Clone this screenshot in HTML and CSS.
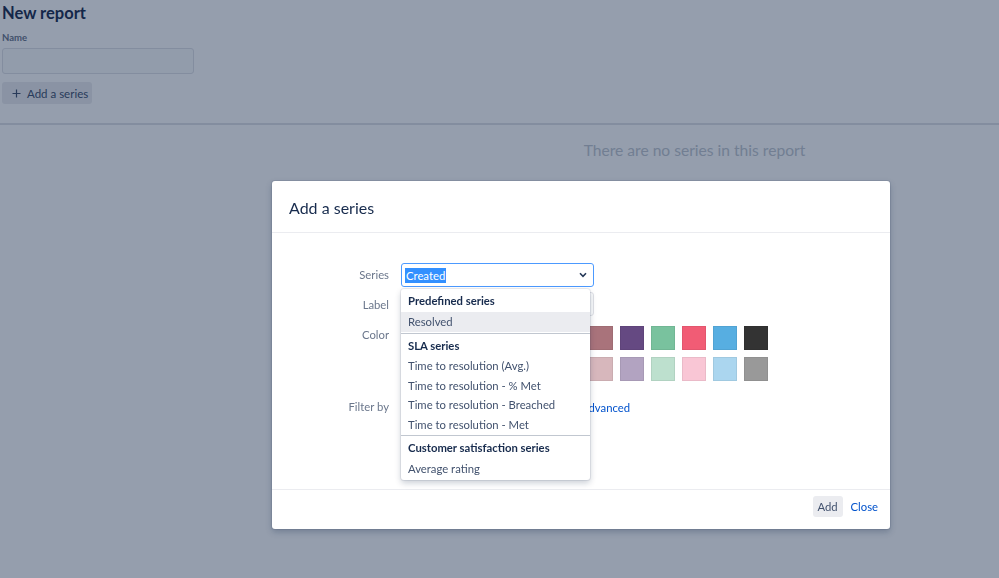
FILE: index.html
```html
<!DOCTYPE html>
<html lang="en">
<head>
<meta charset="utf-8">
<title>New report</title>
<link rel="stylesheet" href="styles.css">
</head>
<body>
<main class="page">
  <h1 class="title">New report</h1>
  <div class="field">
    <label class="field-label">Name</label>
    <div class="text-input"></div>
  </div>
  <button class="btn-add" type="button">
    <svg class="plus" width="9" height="9" viewBox="0 0 9 9"><path d="M4.5 0.5v8M0.5 4.5h8" stroke="currentColor" stroke-width="1.2" fill="none"/></svg>
    <span>Add a series</span>
  </button>
  <div class="divider"></div>
  <div class="empty">There are no series in this report</div>
</main>

<div class="blanket"></div>

<section class="modal">
  <header class="modal-header">
    <h2 class="modal-title">Add a series</h2>
  </header>
  <div class="modal-body">
    <div class="row row-series">
      <div class="form-label">Series</div>
      <div class="control">
        <div class="select">
          <span class="selected">Created</span>
          <svg class="chev" width="8" height="6" viewBox="0 0 8 6"><path d="M1 1.3l3 3 3-3" stroke="#253858" stroke-width="1.6" fill="none"/></svg>
        </div>
        <div class="dropdown">
          <div class="dd-group">Predefined series</div>
          <div class="dd-item active">Resolved</div>
          <div class="dd-sep"></div>
          <div class="dd-group">SLA series</div>
          <div class="dd-item">Time to resolution (Avg.)</div>
          <div class="dd-item">Time to resolution - % Met</div>
          <div class="dd-item">Time to resolution - Breached</div>
          <div class="dd-item">Time to resolution - Met</div>
          <div class="dd-sep"></div>
          <div class="dd-group">Customer satisfaction series</div>
          <div class="dd-item">Average rating</div>
        </div>
      </div>
    </div>
    <div class="row row-label">
      <div class="form-label">Label</div>
      <div class="control"><div class="text-field"></div></div>
    </div>
    <div class="row row-color">
      <div class="form-label label-color">Color</div>
      <div class="swatches">
        <span class="sw c1"></span><span class="sw c2"></span><span class="sw c3"></span><span class="sw c4"></span><span class="sw c5"></span><span class="sw c6"></span>
        <span class="sw c7"></span><span class="sw c8"></span><span class="sw c9"></span><span class="sw c10"></span><span class="sw c11"></span><span class="sw c12"></span>
        <span class="sw c13"></span><span class="sw c14"></span><span class="sw c15"></span><span class="sw c16"></span><span class="sw c17"></span><span class="sw c18"></span>
        <span class="sw c19"></span><span class="sw c20"></span><span class="sw c21"></span><span class="sw c22"></span><span class="sw c23"></span><span class="sw c24"></span>
      </div>
    </div>
    <div class="row row-filter">
      <div class="form-label">Filter by</div>
      <div class="control filter">
        <div class="filter-field"></div>
        <a class="link" href="#">Advanced</a>
      </div>
    </div>
  </div>
  <footer class="modal-footer">
    <button class="btn" type="button">Add</button>
    <a class="link close" href="#">Close</a>
  </footer>
</section>
</body>
</html>
```
FILE: styles.css
```css
* { box-sizing: border-box; }

html, body {
  margin: 0;
  height: 100%;
}

body {
  font-family: "Lato", "Liberation Sans", sans-serif;
  color: #172b4d;
  background: #ffffff;
  overflow: hidden;
}

.page {
  padding: 2px 0 0 2px;
}

.title {
  margin: 0;
  font-size: 16.5px;
  font-weight: 700;
  line-height: 22px;
  color: #1d2e50;
}

.field {
  margin-top: 8px;
  display: flex;
  flex-direction: column;
}

.field-label {
  font-size: 9.5px;
  font-weight: 700;
  line-height: 12px;
  color: #6b778c;
}

.text-input {
  margin-top: 4px;
  width: 192px;
  height: 26px;
  border: 1px solid #dfe1e6;
  border-radius: 3px;
  background: #fafbfc;
}

.btn-add {
  margin-top: 8px;
  display: flex;
  align-items: center;
  gap: 6px;
  width: 90px;
  height: 22px;
  padding: 0 0 0 10px;
  border: none;
  border-radius: 3px;
  background: #ebecf0;
  color: #42526e;
  font-family: inherit;
  font-size: 11.5px;
}

.plus { color: #42526e; }

.divider {
  margin-top: 19px;
  margin-left: -2px;
  height: 2px;
  background: #dfe1e6;
}

.empty {
  margin-top: 14px;
  margin-left: 388px;
  text-align: center;
  font-size: 15.6px;
  line-height: 22px;
  color: #c1c7d0;
}

.blanket {
  position: fixed;
  inset: 0;
  background: rgba(9, 30, 66, 0.43);
}

.modal {
  position: fixed;
  left: 272px;
  top: 181px;
  width: 618px;
  height: 348px;
  background: #ffffff;
  border-radius: 3px;
  box-shadow: 0 0 0 1px rgba(9, 30, 66, 0.08), 0 3px 6px rgba(9, 30, 66, 0.25);
  display: flex;
  flex-direction: column;
}

.modal-header {
  height: 52px;
  padding: 2px 0 0 17px;
  border-bottom: 1px solid #ebecf0;
  display: flex;
  align-items: center;
}

.modal-title {
  margin: 0;
  font-size: 16px;
  font-weight: 400;
  color: #172b4d;
}

.modal-body {
  flex: 1;
  padding-top: 30px;
  font-size: 11.3px;
}

.row {
  display: flex;
  align-items: flex-start;
}

.row-label { margin-top: 5px; }
.row-label .form-label { padding-top: 2px; line-height: 22px; }
.row-color { margin-top: 10px; }
.row-filter { margin-top: 14px; }

.form-label {
  width: 117px;
  margin-right: 12px;
  text-align: right;
  line-height: 24px;
  color: #6b778c;
}

.label-color { line-height: 18px; }

.control {
  position: relative;
  width: 193px;
}

.select {
  height: 24px;
  border: 1px solid #4c9aff;
  border-radius: 3px;
  background: #ffffff;
  display: flex;
  align-items: center;
  justify-content: space-between;
  padding: 0 6px 0 3px;
}

.selected {
  background: #3390ff;
  color: #ffffff;
  line-height: 15px;
  padding: 0 1px;
}

.chev { margin-top: -1px; }

.dropdown {
  position: absolute;
  z-index: 2;
  left: 0;
  top: 26px;
  width: 189px;
  padding: 1px 0 2px;
  background: #ffffff;
  border-radius: 3px;
  box-shadow: 0 0 0 1px rgba(9, 30, 66, 0.08), 0 3px 6px rgba(9, 30, 66, 0.22);
}

.dd-group {
  height: 21.5px;
  line-height: 21.5px;
  padding-left: 7px;
  font-weight: 700;
  color: #172b4d;
}

.dd-item {
  height: 19.5px;
  line-height: 19.5px;
  padding-left: 7px;
  color: #42526e;
}

.dd-item.active {
  height: 20px;
  line-height: 20px;
  background: #ebecf0;
}

.dd-sep {
  height: 1px;
  margin: 1px 0;
  background: #c1c7d0;
}

.text-field {
  height: 24px;
  border: 1px solid #dfe1e6;
  border-radius: 3px;
  background: #fafbfc;
}

.swatches {
  padding-left: 2px;
  display: grid;
  grid-template-columns: repeat(12, 24px);
  grid-auto-rows: 24px;
  gap: 7px;
}

.sw {
  display: block;
  box-shadow: inset 0 0 0 1px rgba(0, 0, 0, 0.06);
}

.c1 { background: #3b7fc4; }
.c2 { background: #d04437; }
.c3 { background: #14892c; }
.c4 { background: #f6c342; }
.c5 { background: #f79232; }
.c6 { background: #815b3a; }
.c7 { background: #a9737b; }
.c8 { background: #654982; }
.c9 { background: #79c29e; }
.c10 { background: #f15c75; }
.c11 { background: #57aee1; }
.c12 { background: #333333; }
.c13 { background: #9ebfe1; }
.c14 { background: #e8a19b; }
.c15 { background: #89c495; }
.c16 { background: #fae1a0; }
.c17 { background: #fbc898; }
.c18 { background: #c0ad9c; }
.c19 { background: #d7b7bc; }
.c20 { background: #b2a3c1; }
.c21 { background: #bde0ce; }
.c22 { background: #f9c6d5; }
.c23 { background: #abd6ef; }
.c24 { background: #999999; }

.filter {
  display: flex;
  align-items: center;
  height: 24px;
  width: auto;
}

.filter-field {
  width: 172px;
  height: 24px;
  border: 1px solid #dfe1e6;
  border-radius: 3px;
}

.link {
  margin-left: 8px;
  color: #0052cc;
  text-decoration: none;
}

.modal-footer {
  height: 40px;
  border-top: 1px solid #ebecf0;
  display: flex;
  justify-content: flex-end;
  align-items: flex-start;
  padding: 6px 12px 0 0;
  gap: 8px;
  font-size: 11.3px;
}

.btn {
  height: 21px;
  width: 30px;
  padding: 0;
  border: none;
  border-radius: 3px;
  background: #ebecf0;
  color: #42526e;
  font-family: inherit;
  font-size: 11.3px;
}

.close {
  margin-left: 0;
  line-height: 21px;
}
```
